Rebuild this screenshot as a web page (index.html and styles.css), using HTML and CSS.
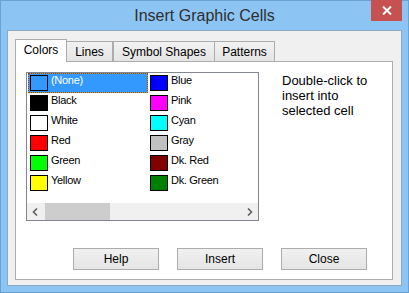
FILE: index.html
```html
<!DOCTYPE html>
<html lang="en">
<head>
<meta charset="UTF-8" />
<title>Insert Graphic Cells</title>
<link rel="stylesheet" href="styles.css">
</head>
<body>
<div class="window">
  <div class="titlebar">
    <span class="title">Insert Graphic Cells</span>
    <button class="close-btn" aria-label="Close">
      <svg width="10" height="9" viewBox="0 0 10 9"><path d="M1 0.5 L9 8.5 M9 0.5 L1 8.5" stroke="#fff" stroke-width="2"/></svg>
    </button>
  </div>
  <div class="client">
    <div class="tabs">
      <div class="tab active">Colors</div>
      <div class="tab tab-lines">Lines</div>
      <div class="tab tab-shapes">Symbol Shapes</div>
      <div class="tab tab-patterns">Patterns</div>
    </div>
    <div class="panel">
      <div class="panel-top">
        <div class="listbox">
          <div class="items">
            <div class="item selected"><span class="swatch none"></span><span class="label">(None)</span></div>
            <div class="item"><span class="swatch" style="background:#0000ff"></span><span class="label">Blue</span></div>
            <div class="item"><span class="swatch" style="background:#000000"></span><span class="label">Black</span></div>
            <div class="item"><span class="swatch" style="background:#ff00ff"></span><span class="label">Pink</span></div>
            <div class="item"><span class="swatch" style="background:#ffffff"></span><span class="label">White</span></div>
            <div class="item"><span class="swatch" style="background:#00ffff"></span><span class="label">Cyan</span></div>
            <div class="item"><span class="swatch" style="background:#ff0000"></span><span class="label">Red</span></div>
            <div class="item"><span class="swatch" style="background:#c0c0c0"></span><span class="label">Gray</span></div>
            <div class="item"><span class="swatch" style="background:#00ff00"></span><span class="label">Green</span></div>
            <div class="item"><span class="swatch" style="background:#800000"></span><span class="label">Dk. Red</span></div>
            <div class="item"><span class="swatch" style="background:#ffff00"></span><span class="label">Yellow</span></div>
            <div class="item"><span class="swatch" style="background:#008000"></span><span class="label">Dk. Green</span></div>
          </div>
          <div class="hscroll">
            <div class="arrow">
              <svg width="7" height="8" viewBox="0 0 7 8"><path d="M5 0.5 L1.5 4 L5 7.5" fill="none" stroke="#606060" stroke-width="1.6"/></svg>
            </div>
            <div class="track"><div class="thumb"></div></div>
            <div class="arrow">
              <svg width="7" height="8" viewBox="0 0 7 8"><path d="M2 0.5 L5.5 4 L2 7.5" fill="none" stroke="#606060" stroke-width="1.6"/></svg>
            </div>
          </div>
        </div>
        <div class="hint">Double-click to<br>insert into<br>selected cell</div>
      </div>
      <div class="buttons">
        <button class="btn">Help</button>
        <button class="btn">Insert</button>
        <button class="btn">Close</button>
      </div>
    </div>
  </div>
</div>
</body>
</html>
```

FILE: styles.css
```css
* {
  box-sizing: border-box;
}
body {
  margin: 0;
  font-family: 'Liberation Sans', Arial, sans-serif;
  background: #ffffff;
}

.window {
  width: 409px;
  height: 293px;
  background: #8cc4f4;
  border: 1px solid #6aa2d6;
  padding: 0 6px 6px 6px;
  display: flex;
  flex-direction: column;
}

.titlebar {
  height: 29px;
  display: flex;
  align-items: center;
  justify-content: center;
  position: relative;
}
.title {
  font-size: 16px;
  color: #2f2f2f;
  margin-top: 1px;
}
.close-btn {
  position: absolute;
  top: -1px;
  right: 0;
  width: 31px;
  height: 21px;
  border: none;
  padding: 0;
  background: #c75050;
  display: flex;
  align-items: center;
  justify-content: center;
}

.client {
  flex: 1;
  background: #f0f0f0;
  border: 1px solid #8ea8c4;
  padding: 8px 8px 5px 7px;
  display: flex;
  flex-direction: column;
}

/* tab strip */
.tabs {
  display: flex;
  align-items: flex-end;
  height: 22px;
}
.tab {
  height: 20px;
  font-size: 12px;
  color: #000;
  border: 1px solid #acacac;
  border-bottom: none;
  background: linear-gradient(#f2f2f2, #e4e4e4);
  display: flex;
  align-items: center;
  justify-content: center;
  padding-top: 1px;
}
.tab.active {
  width: 52px;
  height: 23px;
  margin-bottom: -1px;
  background: #ffffff;
  position: relative;
  z-index: 1;
  padding-top: 0;
  padding-bottom: 2px;
}
.tab-lines {
  width: 46px;
  border-left: none;
}
.tab-shapes {
  width: 102px;
}
.tab-patterns {
  width: 61px;
  margin-left: -1px;
}

.panel {
  flex: 1;
  background: #ffffff;
  border: 1px solid #adadad;
  padding: 10px 0 9px 10px;
  display: flex;
  flex-direction: column;
}
.panel-top {
  display: flex;
}

/* color list */
.listbox {
  width: 233px;
  height: 149px;
  border: 1px solid #828790;
  display: flex;
  flex-direction: column;
}
.items {
  height: 130px;
  padding-left: 1px;
  display: grid;
  grid-template-columns: 120px 120px;
  grid-auto-rows: 20px;
  overflow: hidden;
}
.item {
  display: flex;
  align-items: flex-start;
  font-size: 11px;
  color: #000;
  position: relative;
}
.swatch {
  width: 18px;
  height: 16px;
  margin: 2px 0 0 2px;
  border: 1px solid #000;
  flex-shrink: 0;
}
.swatch.none {
  background: transparent;
}
.label {
  margin-left: 3px;
  line-height: 13px;
  padding-top: 1px;
  letter-spacing: -0.3px;
  white-space: nowrap;
}
.item.selected {
  background: #3399ff;
  color: #ffffff;
}
.item.selected::after {
  content: '';
  position: absolute;
  inset: 0;
  border: 1px dotted #000;
  outline: 1px solid rgba(240, 150, 40, 0.55);
  outline-offset: -1px;
}

.hscroll {
  margin-top: auto;
  height: 17px;
  background: #f0f0f0;
  display: flex;
}
.arrow {
  width: 17px;
  display: flex;
  align-items: center;
  justify-content: center;
}
.track {
  flex: 1;
}
.thumb {
  width: 65px;
  height: 17px;
  margin-left: 1px;
  background: #cdcdcd;
}

.hint {
  margin-left: 23px;
  margin-top: 1px;
  font-size: 13px;
  line-height: 15px;
  color: #000;
}

/* dialog buttons */
.buttons {
  display: flex;
  gap: 18px;
  margin-top: 27px;
  padding-left: 47px;
}
.btn {
  width: 86px;
  height: 22px;
  font-family: 'Liberation Sans', Arial, sans-serif;
  font-size: 12px;
  color: #000;
  border: 1px solid #acacac;
  background: linear-gradient(#f0f0f0, #e5e5e5);
  padding: 0;
}
```
